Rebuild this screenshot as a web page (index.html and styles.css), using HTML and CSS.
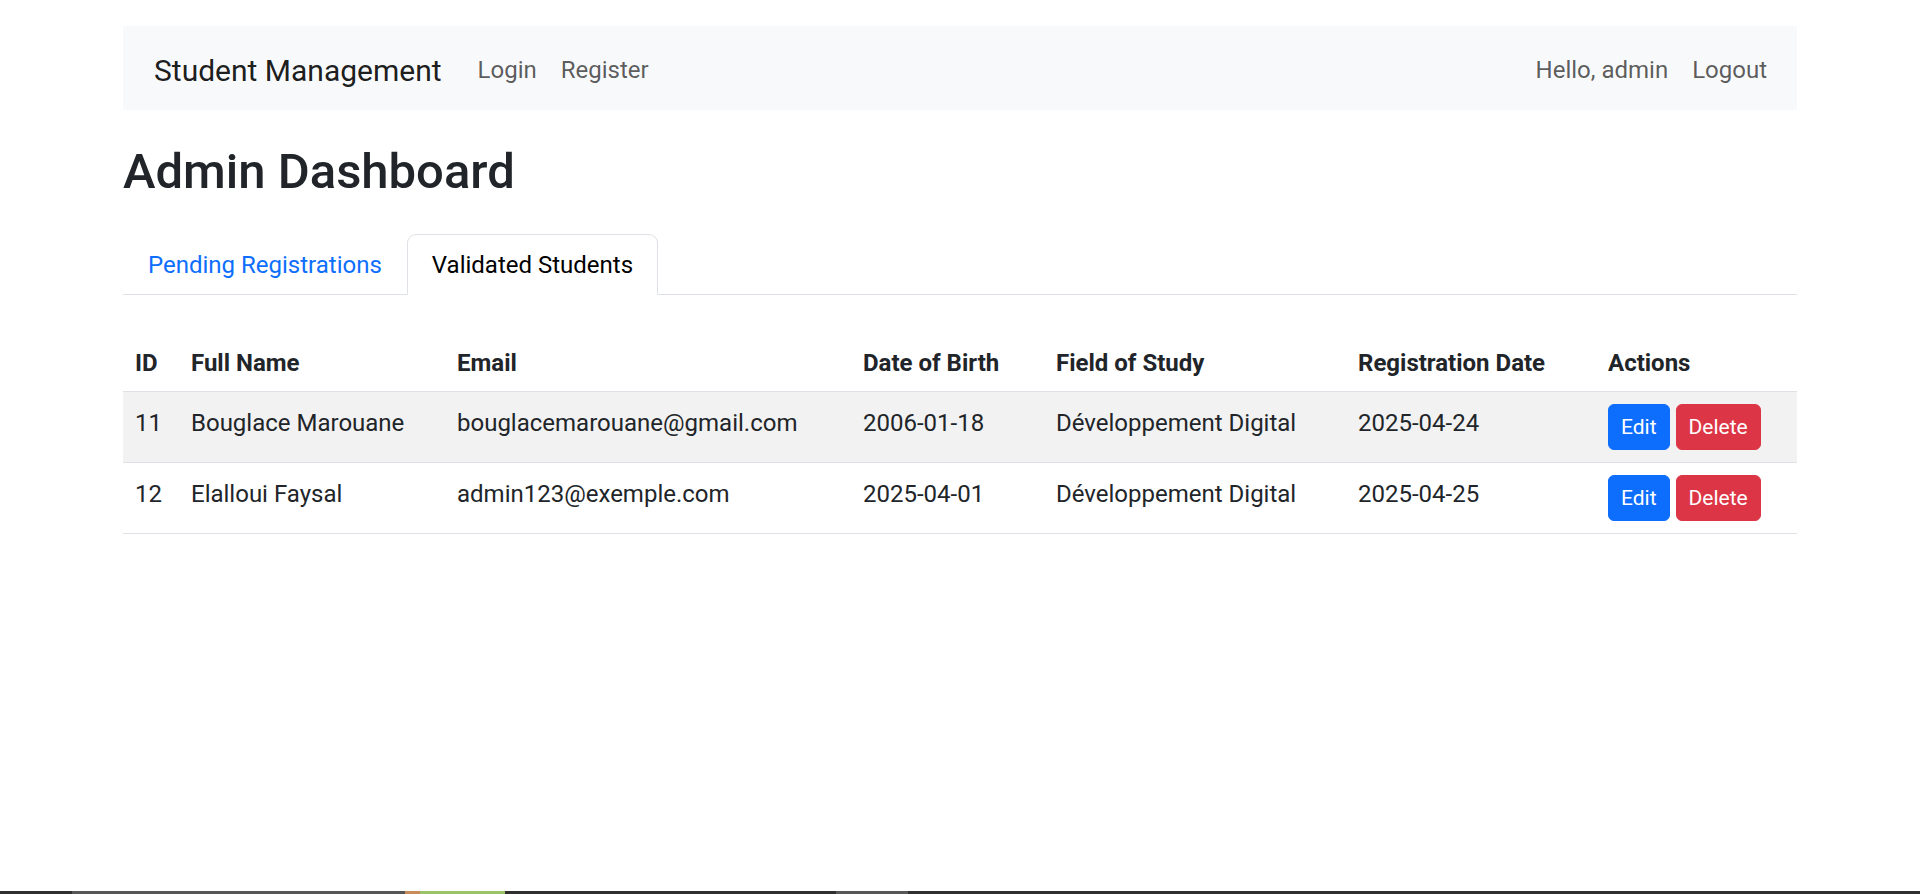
FILE: index.html
```html
<!DOCTYPE html>
<html lang="en">
<head>
<meta charset="utf-8">
<title>Admin Dashboard</title>
<link rel="stylesheet" href="styles.css">
</head>
<body>
<div class="container">
  <nav class="navbar">
    <a class="brand" href="#">Student Management</a>
    <ul class="nav nav-left">
      <li><a class="nav-link" href="#">Login</a></li>
      <li><a class="nav-link" href="#">Register</a></li>
    </ul>
    <ul class="nav nav-right">
      <li><span class="nav-link">Hello, admin</span></li>
      <li><a class="nav-link" href="#">Logout</a></li>
    </ul>
  </nav>

  <h2 class="page-title">Admin Dashboard</h2>

  <ul class="tabs">
    <li><a class="tab-link" href="#">Pending Registrations</a></li>
    <li><a class="tab-link active" href="#">Validated Students</a></li>
  </ul>

  <div class="tab-content">
    <table class="table">
      <colgroup>
        <col class="c-id"><col class="c-name"><col class="c-email"><col class="c-dob"><col class="c-field"><col class="c-reg"><col class="c-act">
      </colgroup>
      <thead>
        <tr>
          <th>ID</th><th>Full Name</th><th>Email</th><th>Date of Birth</th><th>Field of Study</th><th>Registration Date</th><th>Actions</th>
        </tr>
      </thead>
      <tbody>
        <tr class="striped">
          <td>11</td><td>Bouglace Marouane</td><td>bouglacemarouane@gmail.com</td><td>2006-01-18</td><td>Développement Digital</td><td>2025-04-24</td>
          <td class="act-cell"><div class="actions"><a class="btn btn-edit" href="#">Edit</a><a class="btn btn-delete" href="#">Delete</a></div></td>
        </tr>
        <tr>
          <td>12</td><td>Elalloui Faysal</td><td>admin123@exemple.com</td><td>2025-04-01</td><td>Développement Digital</td><td>2025-04-25</td>
          <td class="act-cell"><div class="actions"><a class="btn btn-edit" href="#">Edit</a><a class="btn btn-delete" href="#">Delete</a></div></td>
        </tr>
      </tbody>
    </table>
  </div>
</div>
<div class="taskbar"></div>
</body>
</html>
```
FILE: styles.css
```css
* { box-sizing: border-box; }

html, body {
  margin: 0;
  padding: 0;
  background: #fff;
}

body {
  font-family: Roboto, "Noto Sans", sans-serif;
  font-size: 24px;
  line-height: 36px;
  color: #212529;
}

a { text-decoration: none; }

.container {
  width: 1674px;
  margin: 0 auto;
  padding-top: 26px;
}

/* Navbar */
.navbar {
  display: flex;
  align-items: center;
  height: 84px;
  padding: 4px 18px 0 31px;
  background: #f8f9fa;
}

.brand {
  font-size: 30px;
  line-height: 45px;
  color: rgba(0, 0, 0, 0.9);
  margin-right: 24px;
}

.nav {
  display: flex;
  list-style: none;
  margin: 0;
  padding: 0;
}

.nav-right { margin-left: auto; }

.nav-link {
  display: block;
  padding: 0 12px;
  font-size: 24px;
  line-height: 36px;
  color: rgba(0, 0, 0, 0.65);
}

/* Heading */
.page-title {
  margin: 33px 0 33px;
  font-size: 49px;
  line-height: 58px;
  font-weight: 500;
  color: #212529;
}

/* Tabs */
.tabs {
  display: flex;
  list-style: none;
  margin: 0;
  padding: 0;
  border-bottom: 1px solid #dee2e6;
}

.tab-link {
  display: block;
  padding: 12px 24px 11px;
  margin-bottom: -1px;
  font-size: 24px;
  line-height: 36px;
  color: #0d6efd;
  border: 1px solid transparent;
  border-radius: 9px 9px 0 0;
}

.tab-link.active {
  color: #000;
  background: #fff;
  border-color: #dee2e6 #dee2e6 #fff;
}

/* Table */
.tab-content { padding-top: 36px; }

.table {
  width: 100%;
  border-collapse: collapse;
  table-layout: fixed;
}

.c-id { width: 56px; }
.c-name { width: 266px; }
.c-email { width: 406px; }
.c-dob { width: 193px; }
.c-field { width: 302px; }
.c-reg { width: 250px; }
.c-act { width: 201px; }

.table th,
.table td {
  padding: 12px;
  text-align: left;
  vertical-align: middle;
  border-bottom: 1px solid #dee2e6;
  white-space: nowrap;
}

.table th {
  padding: 14px 12px 10px;
  font-weight: 700;
  vertical-align: bottom;
}

.table td {
  padding: 8px 12px 16px;
}

.table td.act-cell {
  padding: 12px;
}

.table tr.striped td { background: #f2f2f2; }

.actions {
  display: flex;
  gap: 6px;
}

.btn {
  display: inline-block;
  padding: 6px 12px;
  font-size: 21px;
  line-height: 32px;
  color: #fff;
  border: 1px solid transparent;
  border-radius: 6px;
}

.btn-edit { background: #0d6efd; border-color: #0d6efd; }
.btn-delete { background: #dc3545; border-color: #dc3545; }

/* Bottom strip */
.taskbar {
  position: fixed;
  left: 0;
  right: 0;
  bottom: 0;
  height: 3px;
  background: linear-gradient(to right,
    #2f2f2f 0, #2f2f2f 72px,
    #565656 72px, #565656 405px,
    #c98b5a 405px, #c98b5a 420px,
    #9bc46a 420px, #9bc46a 505px,
    #2f2f2f 505px, #2f2f2f 836px,
    #575757 836px, #575757 908px,
    #2f2f2f 908px, #2f2f2f 100%);
}
```
